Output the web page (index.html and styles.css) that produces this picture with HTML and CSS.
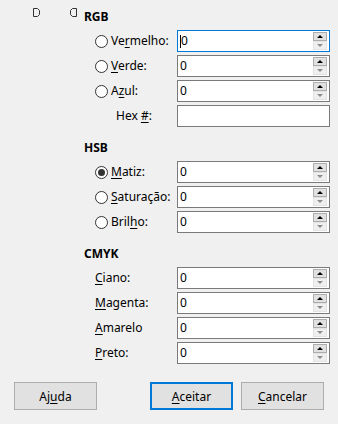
FILE: index.html
```html
<!DOCTYPE html>
<html lang="pt-BR">
<head>
  <meta charset="UTF-8">
  <title>Escolher cor</title>
  <link rel="stylesheet" href="styles.css">
</head>
<body>

  <div class="dialog">
    <div class="main">
      <div class="preview">
        <svg class="preview-icon" width="8" height="9" viewBox="0 0 8 9">
          <path d="M0.5 0.5 H4.5 L6.5 2.5 V6.5 L4.5 8.5 H0.5 Z" fill="none" stroke="#333" stroke-width="1"/>
        </svg>
        <svg class="preview-icon" width="8" height="9" viewBox="0 0 8 9">
          <path d="M7.5 0.5 H3.5 L1.5 2.5 V6.5 L3.5 8.5 H7.5 Z" fill="none" stroke="#333" stroke-width="1"/>
        </svg>
      </div>

      <div class="panels">
        <!-- RGB -->
        <section class="group">
          <h2 class="group-title">RGB</h2>
          <div class="row">
            <label class="choice"><span class="radio"></span><span>Ve<u>r</u>melho:</span></label>
            <div class="field is-focused">
              <span class="value"><span class="caret"></span>0</span>
              <span class="arrows"><span class="arrow up"></span><span class="arrow down"></span></span>
            </div>
          </div>
          <div class="row">
            <label class="choice"><span class="radio"></span><span><u>V</u>erde:</span></label>
            <div class="field">
              <span class="value">0</span>
              <span class="arrows"><span class="arrow up"></span><span class="arrow down"></span></span>
            </div>
          </div>
          <div class="row">
            <label class="choice"><span class="radio"></span><span>A<u>z</u>ul:</span></label>
            <div class="field">
              <span class="value">0</span>
              <span class="arrows"><span class="arrow up"></span><span class="arrow down"></span></span>
            </div>
          </div>
          <div class="row">
            <label class="plain hex"><span>Hex <u>#</u>:</span></label>
            <div class="field">
              <span class="value"></span>
            </div>
          </div>
        </section>

        <!-- HSB -->
        <section class="group">
          <h2 class="group-title">HSB</h2>
          <div class="row">
            <label class="choice"><span class="radio is-checked"></span><span><u>M</u>atiz:</span></label>
            <div class="field">
              <span class="value">0</span>
              <span class="arrows"><span class="arrow up"></span><span class="arrow down"></span></span>
            </div>
          </div>
          <div class="row">
            <label class="choice"><span class="radio"></span><span><u>S</u>aturação:</span></label>
            <div class="field">
              <span class="value">0</span>
              <span class="arrows"><span class="arrow up"></span><span class="arrow down"></span></span>
            </div>
          </div>
          <div class="row">
            <label class="choice"><span class="radio"></span><span>Bril<u>h</u>o:</span></label>
            <div class="field">
              <span class="value">0</span>
              <span class="arrows"><span class="arrow up"></span><span class="arrow down"></span></span>
            </div>
          </div>
        </section>

        <!-- CMYK -->
        <section class="group">
          <h2 class="group-title">CMYK</h2>
          <div class="row">
            <label class="plain"><span><u>C</u>iano:</span></label>
            <div class="field">
              <span class="value">0</span>
              <span class="arrows"><span class="arrow up"></span><span class="arrow down"></span></span>
            </div>
          </div>
          <div class="row">
            <label class="plain"><span><u>M</u>agenta:</span></label>
            <div class="field">
              <span class="value">0</span>
              <span class="arrows"><span class="arrow up"></span><span class="arrow down"></span></span>
            </div>
          </div>
          <div class="row">
            <label class="plain"><span><u>A</u>marelo</span></label>
            <div class="field">
              <span class="value">0</span>
              <span class="arrows"><span class="arrow up"></span><span class="arrow down"></span></span>
            </div>
          </div>
          <div class="row">
            <label class="plain"><span><u>P</u>reto:</span></label>
            <div class="field">
              <span class="value">0</span>
              <span class="arrows"><span class="arrow up"></span><span class="arrow down"></span></span>
            </div>
          </div>
        </section>
      </div>
    </div>

    <div class="buttons">
      <button type="button" class="btn">Aj<u>u</u>da</button>
      <div class="btn-group">
        <button type="button" class="btn is-default"><u>A</u>ceitar</button>
        <button type="button" class="btn"><u>C</u>ancelar</button>
      </div>
    </div>
  </div>

</body>
</html>
```

FILE: styles.css
```css
html,
body {
  margin: 0;
  background: #f0f0f0;
}
body {
  width: 338px;
  height: 424px;
  overflow: hidden;
  font-family: "Noto Sans", "Liberation Sans", sans-serif;
  font-size: 12px;
  color: #000;
}
u {
  text-decoration-thickness: 1px;
  text-underline-offset: 2px;
}

.main {
  display: flex;
}
.preview {
  width: 84px;
  display: flex;
  align-items: flex-start;
  gap: 28px;
  padding: 8px 0 0 33px;
  box-sizing: border-box;
}
.preview-icon {
  display: block;
}

.panels {
  width: 246px;
  padding-top: 9px;
}
.group + .group {
  margin-top: 13px;
}
.group-title {
  margin: 0 0 5px;
  font-size: 12px;
  line-height: 16px;
  font-weight: bold;
}

.row {
  display: grid;
  grid-template-columns: 93px 153px;
  align-items: center;
  height: 22px;
}
.row + .row {
  margin-top: 3px;
}
.choice,
.plain {
  display: flex;
  align-items: center;
  white-space: nowrap;
  line-height: 16px;
}
.choice {
  padding-left: 11px;
}
.plain {
  padding-left: 11px;
}
.plain.hex {
  padding-left: 32px;
}

.radio {
  width: 13px;
  height: 13px;
  box-sizing: border-box;
  border: 1px solid #333;
  border-radius: 50%;
  background: #fff;
  margin-right: 3px;
  display: flex;
  align-items: center;
  justify-content: center;
}
.radio.is-checked::after {
  content: "";
  width: 7px;
  height: 7px;
  border-radius: 50%;
  background: #333;
}

.field {
  height: 22px;
  box-sizing: border-box;
  border: 1px solid #7a7a7a;
  background: #fff;
  padding: 1px 2px 1px 2px;
  display: flex;
  align-items: stretch;
}
.field.is-focused {
  border-color: #0078d7;
}
.value {
  flex: 1;
  display: flex;
  align-items: center;
  line-height: 16px;
}
.caret {
  display: inline-block;
  width: 1px;
  height: 13px;
  background: #000;
}

.arrows {
  width: 14px;
  display: flex;
  flex-direction: column;
}
.arrow {
  flex: 1;
  box-sizing: border-box;
  display: flex;
  align-items: center;
  justify-content: center;
}
.arrow.up {
  border: 1px solid #adadad;
  background: #e1e1e1;
}
.arrow.down {
  border: 1px solid #e3e3e3;
  background: #efefef;
}
.arrow.up::after {
  content: "";
  border-left: 3px solid transparent;
  border-right: 3px solid transparent;
  border-bottom: 3px solid #000;
}
.arrow.down::after {
  content: "";
  border-left: 3px solid transparent;
  border-right: 3px solid transparent;
  border-top: 3px solid #8c8c8c;
}

.buttons {
  display: flex;
  justify-content: space-between;
  padding: 0 14px;
  margin-top: 18px;
}
.btn-group {
  display: flex;
  gap: 8px;
}
.btn {
  width: 83px;
  height: 28px;
  box-sizing: border-box;
  border: 1px solid #adadad;
  background: #e1e1e1;
  font-family: inherit;
  font-size: 12px;
  color: #000;
  padding: 0;
}
.btn.is-default {
  border: 2px solid #0078d7;
}
```
